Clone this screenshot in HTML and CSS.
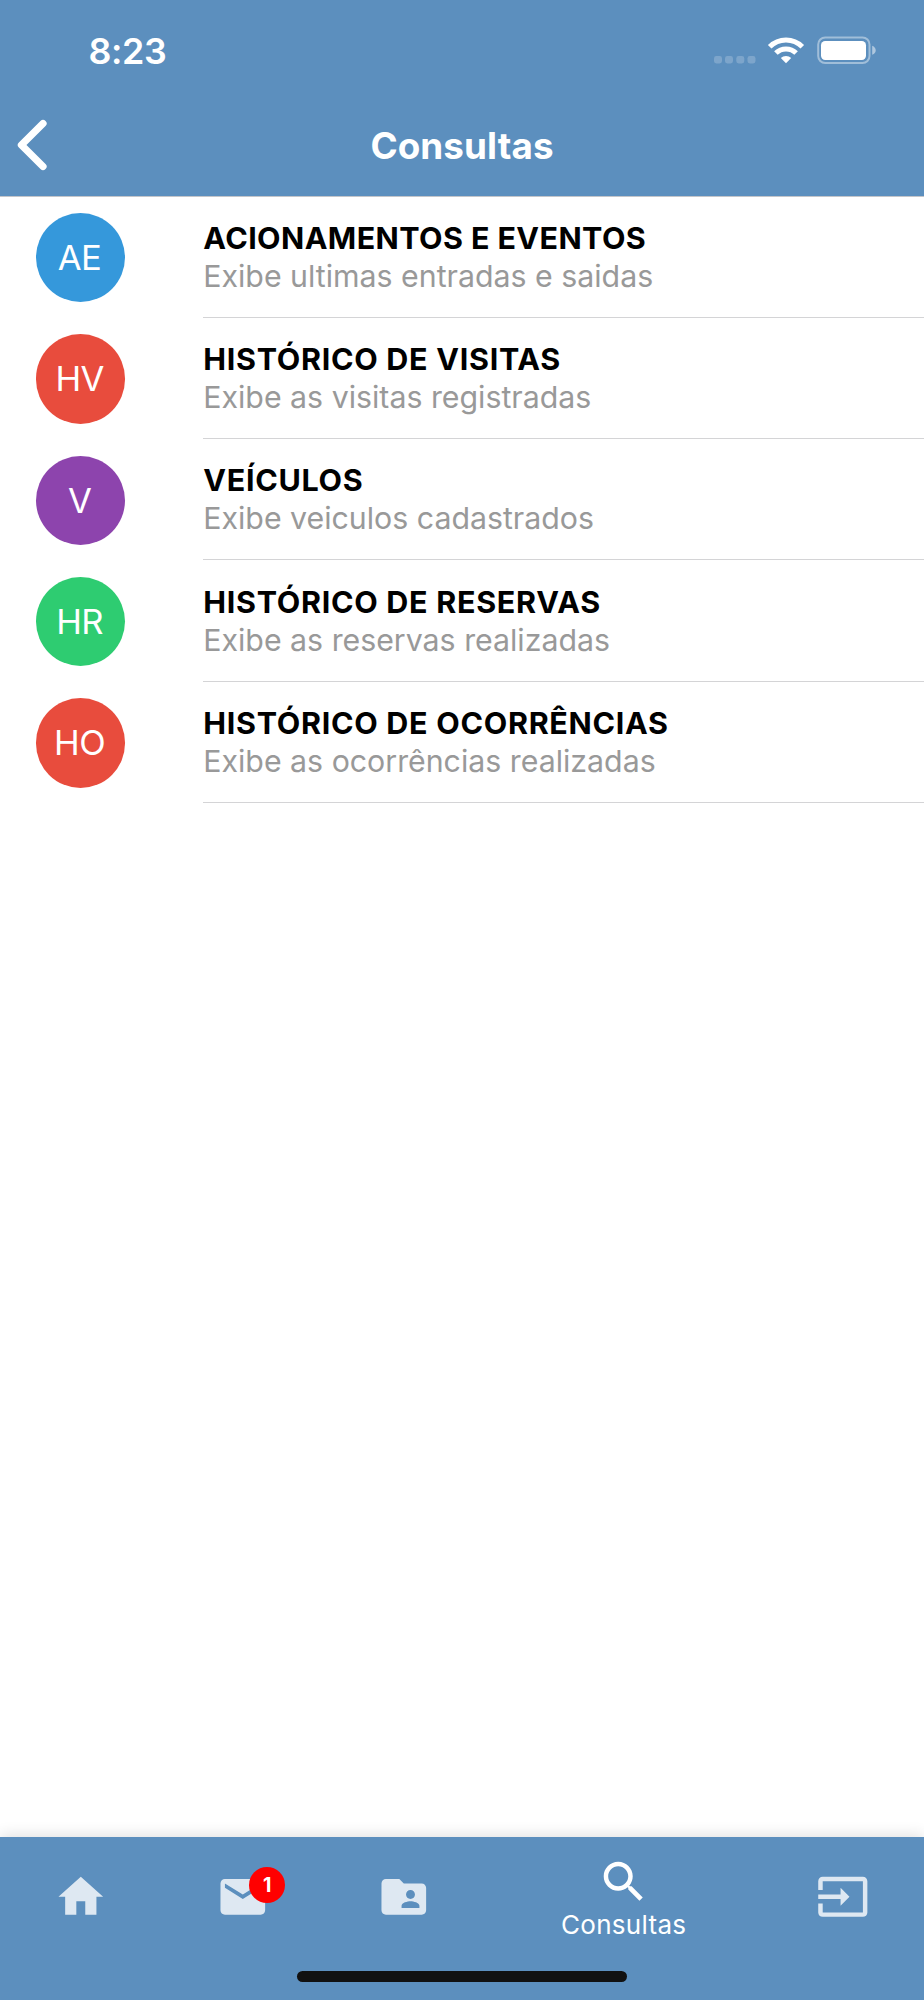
FILE: index.html
```html
<!DOCTYPE html>
<html lang="pt-BR">
<head>
<meta charset="utf-8">
<title>Consultas</title>
<link rel="stylesheet" href="styles.css">
</head>
<body>
<div class="screen">
  <header class="header">
    <div class="status">
      <span class="time">8:23</span>
      <svg class="status-icons" width="164" height="30" viewBox="0 0 164 30" fill="#fff">
        <g opacity=".2">
          <rect x="0" y="21" width="8" height="7.5" rx="2.4"/>
          <rect x="11" y="21" width="8" height="7.5" rx="2.4"/>
          <rect x="22.3" y="21" width="8" height="7.5" rx="2.4"/>
          <rect x="33.5" y="21" width="8" height="7.5" rx="2.4"/>
        </g>
        <path d="M72 28.200l-5.200-5.200a7.500 7.500 0 0 1 10.400 0z"/>
        <g fill="none" stroke="#fff" stroke-width="5">
          <path d="M61.900 18.100a14.300 14.300 0 0 1 20.200 0"/>
          <path d="M55.700 11.700a23 23 0 0 1 32.600 0"/>
        </g>
        <rect x="104.200" y="2.500" width="51.300" height="25.500" rx="7" fill="none" stroke="#fff" stroke-width="2" opacity=".42"/>
        <rect x="107" y="6" width="45" height="19" rx="4.200"/>
        <path d="M158.200 10.700c4.700 1.800 4.700 7.300 0 9.100z" opacity=".5"/>
      </svg>
    </div>
    <div class="navbar">
      <svg class="back" width="34" height="54" viewBox="0 0 34 54" fill="none" stroke="#fff" stroke-width="7.200" stroke-linecap="round" stroke-linejoin="round"><path d="M29 5.500L7.400 27L29 48.500"/></svg>
      <h1 class="title">Consultas</h1>
    </div>
  </header>
  <main class="list">
    <div class="row"><div class="avatar blue">AE</div><div class="text"><div class="name events">ACIONAMENTOS E EVENTOS</div><div class="desc">Exibe ultimas entradas e saidas</div></div></div>
    <div class="row"><div class="avatar red">HV</div><div class="text"><div class="name">HISTÓRICO DE VISITAS</div><div class="desc">Exibe as visitas registradas</div></div></div>
    <div class="row"><div class="avatar purple">V</div><div class="text"><div class="name">VEÍCULOS</div><div class="desc">Exibe veiculos cadastrados</div></div></div>
    <div class="row"><div class="avatar green">HR</div><div class="text"><div class="name">HISTÓRICO DE RESERVAS</div><div class="desc">Exibe as reservas realizadas</div></div></div>
    <div class="row"><div class="avatar red">HO</div><div class="text"><div class="name">HISTÓRICO DE OCORRÊNCIAS</div><div class="desc">Exibe as ocorrências realizadas</div></div></div>
  </main>
  <nav class="tabbar">
    <div class="tabs">
      <div class="tab"><svg class="icon" viewBox="0 0 24 24"><path d="M10 20v-6h4v6h5v-8h3L12 3 2 12h3v8z"/></svg></div>
      <div class="tab">
        <div class="badged">
          <svg class="icon" viewBox="0 0 24 24"><path d="M20 4H4c-1.100 0-1.990.9-1.990 2L2 18c0 1.100.9 2 2 2h16c1.100 0 2-.9 2-2V6c0-1.100-.9-2-2-2zm0 4l-8 5-8-5V6l8 5 8-5v2z"/></svg>
          <span class="badge">1</span>
        </div>
      </div>
      <div class="tab"><svg class="icon" viewBox="0 0 24 24"><path d="M20 6h-8l-2-2H4c-1.100 0-1.990.9-1.990 2L2 18c0 1.100.9 2 2 2h16c1.100 0 2-.9 2-2V8c0-1.100-.9-2-2-2zm-5 3c1.100 0 2 .9 2 2s-.9 2-2 2-2-.9-2-2 .9-2 2-2zm4 8h-8v-1c0-1.330 2.670-2 4-2s4 .67 4 2v1z"/></svg></div>
      <div class="tab active">
        <svg class="icon" viewBox="0 0 24 24"><path d="M15.500 14h-.79l-.28-.27C15.410 12.590 16 11.110 16 9.500 16 5.910 13.090 3 9.500 3S3 5.910 3 9.500 5.910 16 9.500 16c1.610 0 3.090-.59 4.230-1.570l.27.28v.79l5 4.990L20.490 19l-4.990-5zm-6 0C7.010 14 5 11.990 5 9.500S7.010 5 9.500 5 14 7.010 14 9.500 11.990 14 9.500 14z"/></svg>
        <span class="label">Consultas</span>
      </div>
      <div class="tab"><svg class="icon" viewBox="0 0 24 24"><path d="M21 3.010H3c-1.100 0-2 .9-2 2V9h2V4.990h18v14.030H3V15H1v4.010c0 1.100.9 1.980 2 1.980h18c1.100 0 2-.88 2-1.980v-14c0-1.110-.9-2-2-2zM11 16l4-4-4-4v3H1v2h10v3z"/></svg></div>
    </div>
    <div class="home-indicator"></div>
  </nav>
</div>
</body>
</html>
```
FILE: styles.css
```css
* { box-sizing: border-box; }
body { margin: 0; background: #fff; font-family: Inter, "Liberation Sans", sans-serif; }
.screen { width: 924px; height: 2000px; display: flex; flex-direction: column; overflow: hidden; }
.header { height: 197px; flex: none; background: #5c8fbe; border-bottom: 1px solid #c3c5ca; color: #fff; }
.status { height: 98px; padding: 35px 46px 0 88.500px; display: flex; justify-content: space-between; align-items: flex-start; }
.time { font-size: 35.800px; line-height: 32px; font-weight: 600; letter-spacing: -.4px; }
.navbar { height: 98px; display: grid; grid-template-columns: 120px 1fr 120px; align-items: center; }
.back { margin-left: 14px; margin-top: -4px; }
.title { margin: -2px 0 0; text-align: center; font-size: 36.800px; line-height: 44px; font-weight: 700; letter-spacing: .1px; }
.list { flex: 1; }
.row { height: 121.400px; display: flex; align-items: stretch; }
.row:first-child { margin-top: -.7px; }
.avatar { flex: none; width: 89.300px; height: 89.300px; margin: 16.500px 78.300px 0 35.700px; padding-right: 1.500px; border-radius: 50%; color: #fff; font-size: 34.600px; line-height: 88.500px; font-weight: 400; letter-spacing: -.6px; text-align: center; }
.blue { background: #3598db; }
.red { background: #e84c3d; }
.purple { background: #8d44ad; }
.green { background: #2ecc71; }
.text { flex: 1; padding-top: 22.300px; border-bottom: 1px solid #d4d4d6; white-space: nowrap; }
.name { font-size: 30.500px; line-height: 38px; font-weight: 700; color: #000; letter-spacing: .7px; }
.name.events { letter-spacing: .4px; }
.desc { font-size: 30.300px; line-height: 38px; font-weight: 400; color: #999; }
.tabbar { flex: none; height: 163px; background: #5c8fbe; box-shadow: 0 -2px 14px rgba(0,0,0,.12); display: flex; flex-direction: column; align-items: center; }
.tabs { width: 100%; height: 134px; display: flex; }
.tab { width: 161.700px; padding-top: 33.300px; display: flex; flex-direction: column; align-items: center; }
.tab.active { width: 277.200px; padding-top: 17.600px; }
.icon { display: block; width: 53.600px; height: 53.600px; fill: #fff; opacity: .8; }
.active .icon { opacity: 1; }
.badged { position: relative; }
.badge { position: absolute; left: 33.500px; top: -3px; width: 36px; height: 36px; border-radius: 50%; background: #f00; color: #fff; font-size: 19.500px; line-height: 36px; font-weight: 700; text-align: center; }
.label { color: #fff; font-size: 26px; line-height: 32px; margin-top: 1px; letter-spacing: .3px; }
.home-indicator { width: 330px; height: 11px; border-radius: 6px; background: #111; }
```
